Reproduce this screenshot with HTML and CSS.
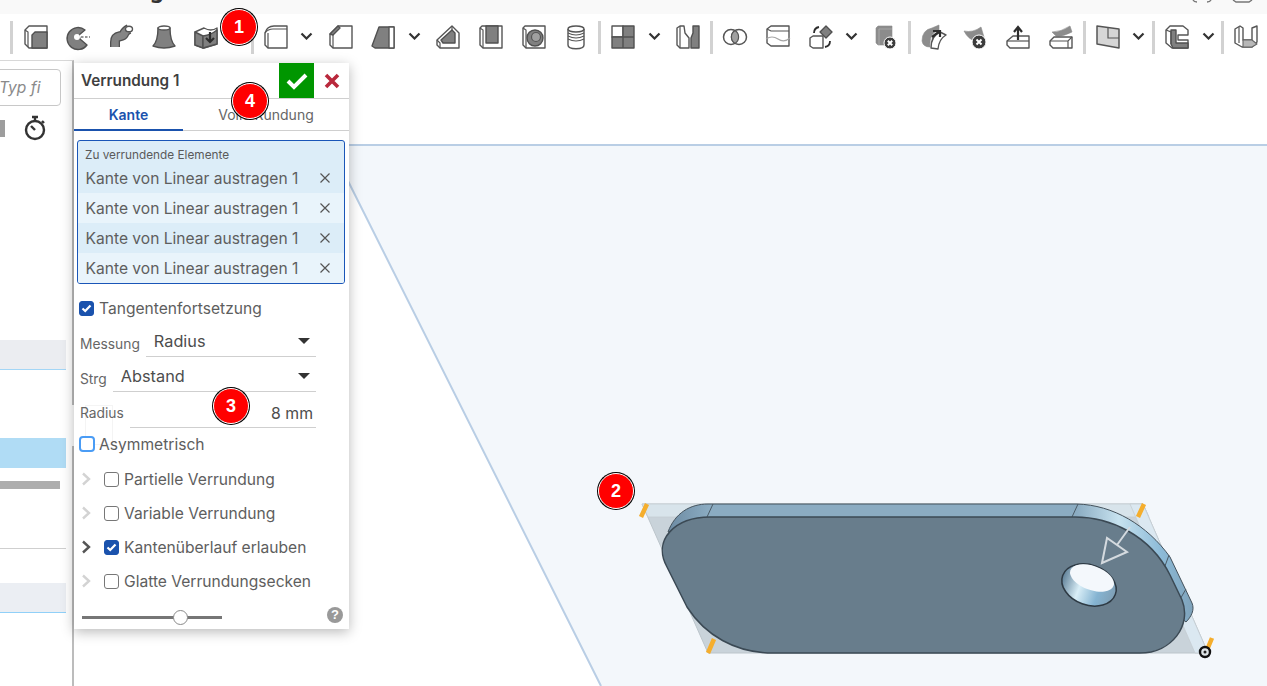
FILE: index.html
```html
<!DOCTYPE html>
<html lang="de">
<head>
<meta charset="utf-8">
<title>Verrundung</title>
<link rel="stylesheet" href="styles.css">
</head>
<body>
<div class="app">
  <div class="topstrip">
    <span class="doc-title">Verrundung</span>
    <svg class="top-frag" width="64" height="4" viewBox="0 0 64 4"><path class="frag" d="M2 0 Q3 2 6 2 M20 0 Q19 2 16 2 M42 0 L45 2 H58 L61 0"/></svg>
  </div>
  <div class="toolbar">
    <i class="sep lead"></i>
    <div class="tool"><svg viewBox="0 0 24 24"><path class="o" d="M1 5 5 1H23V23H5L1 19Z"/><path class="g" d="M8 10 11 7H23V23H8Z"/><path class="l" d="M1 5 4 7V22"/></svg></div>
    <div class="tool"><svg viewBox="0 0 24 24"><path class="g" d="M19 5A11 11 0 1 0 21 20L14 14 13 10Z"/><circle class="w" cx="11" cy="12" r="3"/><path class="d" d="M15 12H24"/></svg></div>
    <div class="tool"><svg viewBox="0 0 24 24"><path class="tube-o" d="M6 22V17C6 9 13 13 15 9 16 6 18 5 20 4"/><path class="tube-i" d="M6 22V17C6 9 13 13 15 9 16 6 18 5 20 4"/><ellipse class="o" cx="20" cy="4" rx="3.5" ry="2.8"/></svg></div>
    <div class="tool"><svg viewBox="0 0 24 24"><path class="g" d="M6 3C6 10 5 17 1 21Q12 25 23 21C19 17 18 10 18 3Z"/><ellipse class="o" cx="12" cy="3" rx="6" ry="2"/></svg></div>
    <div class="tool"><svg viewBox="0 0 24 24"><path class="o" d="M1 7 10 3Q17 7 23 3V19L10 23 1 20Z"/><path class="g" d="M1 7 9 11V23L1 20Z"/><path class="g" d="M9 11Q17 10 23 5V19L9 23Z"/><path class="arrow" d="M16 7V17M12 13 16 17 20 13"/></svg></div>
    <div class="chev"><svg viewBox="0 0 12 8"><path d="M1 1.5 6 6.5 11 1.5"/></svg></div>
    <i class="sep"></i>
    <div class="tool"><svg viewBox="0 0 24 24"><path class="o" d="M1 8Q3 1 10 1H23V23H4L1 20Z"/><path class="l" d="M1 8Q4 4 9 4H23M4 8V23"/></svg></div>
    <div class="chev"><svg viewBox="0 0 12 8"><path d="M1 1.5 6 6.5 11 1.5"/></svg></div>
    <div class="tool"><svg viewBox="0 0 24 24"><path class="o" d="M1 9 9 1H23V23H4L1 20Z"/><path class="g" d="M1 9 9 1 11 3 4 10Z"/><path class="l" d="M4 10V23"/></svg></div>
    <div class="tool"><svg viewBox="0 0 24 24"><path class="g" d="M1 21 8 2H23V23H4Z"/><path class="o" d="M18 2H23V23H18Z"/></svg></div>
    <div class="chev"><svg viewBox="0 0 12 8"><path d="M1 1.5 6 6.5 11 1.5"/></svg></div>
    <div class="tool"><svg viewBox="0 0 24 24"><path class="o" d="M1 15 16 1 23 8V23H4L1 20Z"/><path class="g" d="M5 15 16 5 19 8V18H7Z"/><path class="l" d="M1 15 4 18V23M16 1V5"/></svg></div>
    <div class="tool"><svg viewBox="0 0 24 24"><path class="o" d="M1 3 3 1H23V23H4L1 20Z"/><path class="g" d="M7 1H19V18H7Z"/><path class="l" d="M1 3 4 5V23"/></svg></div>
    <div class="tool"><svg viewBox="0 0 24 24"><path class="o" d="M1 3 3 1H23V23H4L1 20Z"/><circle class="g" cx="13" cy="13" r="8"/><circle class="m" cx="14" cy="12" r="4.5"/><path class="l" d="M1 3 4 5V23"/></svg></div>
    <div class="tool"><svg viewBox="0 0 24 24"><path class="o" d="M4 4V20C4 25 20 25 20 20V4"/><ellipse class="o" cx="12" cy="4" rx="8" ry="3"/><path class="l" d="M4 8Q12 12 20 8M4 11Q12 15 20 11M4 14Q12 18 20 14"/></svg></div>
    <i class="sep"></i>
    <div class="tool"><svg viewBox="0 0 24 24"><path class="o" d="M1 1H12V12H1Z"/><path class="g" d="M12 1H23V12H12ZM1 12H12V23H1ZM12 12H23V23H12Z"/></svg></div>
    <div class="chev"><svg viewBox="0 0 12 8"><path d="M1 1.5 6 6.5 11 1.5"/></svg></div>
    <div class="tool"><svg viewBox="0 0 24 24"><path class="o" d="M1 3 4 1H8L9 8 13 13V23H4L1 20Z"/><path class="g" d="M15 13 17 8V1H23V23H15Z"/><path class="l" d="M4 1V23"/></svg></div>
    <i class="sep"></i>
    <div class="tool"><svg viewBox="0 0 24 24"><circle class="n" cx="8" cy="12" r="7.5"/><circle class="n" cx="16" cy="12" r="7.5"/><path class="m" d="M12 5.6A7.5 7.5 0 0 1 12 18.4 7.5 7.5 0 0 1 12 5.6Z"/></svg></div>
    <div class="tool"><svg viewBox="0 0 24 24"><path class="o" d="M1 4 5 1H23V21H5L1 18Z"/><path class="l" d="M1 4 5 6H23"/><path class="lg" d="M0 14Q6 10 12 14T24 13"/></svg></div>
    <div class="tool"><svg viewBox="0 0 24 24"><path class="o" d="M1 13 4 11H14V23H4L1 21Z"/><path class="g" d="M17 1 23 7 17 13 11 7Z"/><path class="arrow thin" d="M5 8Q5 3 10 2M21 16Q21 21 16 22"/></svg></div>
    <div class="chev"><svg viewBox="0 0 12 8"><path d="M1 1.5 6 6.5 11 1.5"/></svg></div>
    <div class="tool"><svg viewBox="0 0 24 24"><path class="gf" d="M2 3 4 1H18V20H4L2 18Z"/><path class="lg" d="M5 4H18M5 4V20"/><circle class="x-c" cx="16" cy="18" r="6"/><path class="x-w" d="M13.8 15.8 18.2 20.2M18.2 15.8 13.8 20.2"/></svg></div>
    <i class="sep"></i>
    <div class="tool"><svg viewBox="0 0 24 24"><path class="gf" d="M1 16Q1 5 11 3L18 0V5Q8 8 9 22Q2 22 1 16Z"/><path class="o" d="M10 23Q10 11 19 7L25 10Q18 14 17 24Z"/><path class="arrow" d="M19 6 11 12M12 6H19V12"/></svg></div>
    <div class="tool"><svg viewBox="0 0 24 24"><path class="gf" d="M1 6Q10 8 18 2L21 12 12 16Q5 14 1 6Z"/><circle class="x-c" cx="16" cy="17" r="7"/><path class="x-w" d="M13.5 14.5 18.5 19.5M18.5 14.5 13.5 19.5"/></svg></div>
    <div class="tool"><svg viewBox="0 0 24 24"><path class="o" d="M1 16 7 11H23V23H4L1 20Z"/><path class="l" d="M1 16H23"/><path class="arrow" d="M12 15V3M8 7 12 2 16 7"/></svg></div>
    <div class="tool"><svg viewBox="0 0 24 24"><path class="gf" d="M3 7Q12 7 21 1L23 7Q14 12 7 11Z"/><path class="o" d="M1 16 5 12H23V23H4L1 20Z"/><path class="l" d="M1 16H19L23 12M19 16V23"/></svg></div>
    <i class="sep"></i>
    <div class="tool"><svg viewBox="0 0 24 24"><path class="pl" d="M1 1 23 4V23L1 19Z"/><path class="l" d="M12 3V13H23"/></svg></div>
    <div class="chev"><svg viewBox="0 0 12 8"><path d="M1 1.5 6 6.5 11 1.5"/></svg></div>
    <i class="sep"></i>
    <div class="tool"><svg viewBox="0 0 24 24"><path class="o" d="M1 5 5 1H18L23 5V10H13V15H23V23H7L1 18Z"/><path class="g" d="M6 5V19L8 23H23V18H11V5Z"/><path class="l" d="M1 5 6 7V19"/></svg></div>
    <div class="chev"><svg viewBox="0 0 12 8"><path d="M1 1.5 6 6.5 11 1.5"/></svg></div>
    <i class="sep"></i>
    <div class="tool"><svg viewBox="0 0 24 24"><path class="o" d="M1 4 6 1 9 3V15H18V3L23 1V17L18 22H8L1 18Z"/><path class="gl" d="M9 15H18L23 19 18 22H9Z"/><path class="l" d="M5 2V18"/></svg></div>
  </div>

  <div class="main">
    <aside class="side">
      <div class="search"><span class="search-text">Typ fi</span></div>
      <div class="side-icons">
        <i class="side-block"></i>
        <svg class="watch" width="24" height="26" viewBox="0 0 24 26"><path d="M9 2H15M12 2V6M19 6 21 8"/><circle cx="12" cy="15" r="9"/><path d="M12 15 8 11"/></svg>
      </div>
      <div class="row-a"></div>
      <div class="row-sel"></div>
      <div class="row-bar"></div>
      <div class="row-line"></div>
      <div class="row-b"></div>
    </aside>
    <i class="side-gap"></i>

    <section class="view">
      <svg class="scene" width="1267" height="626" viewBox="0 60 1267 626">
        <defs>
          <linearGradient id="bandG" gradientUnits="userSpaceOnUse" x1="668" x2="1192" y1="0" y2="0">
            <stop offset="0" stop-color="#6d8ba3"/>
            <stop offset="0.08" stop-color="#8bacc2"/>
            <stop offset="0.78" stop-color="#8bacc2"/>
            <stop offset="0.86" stop-color="#c7e2ef"/>
            <stop offset="0.94" stop-color="#8dbbd8"/>
            <stop offset="1" stop-color="#7fa3bb"/>
          </linearGradient>
          <linearGradient id="holeG" x1="0" x2="1" y1="0" y2="0">
            <stop offset="0" stop-color="#5f8098"/>
            <stop offset="0.35" stop-color="#d9eef7"/>
            <stop offset="0.7" stop-color="#85b4d2"/>
            <stop offset="1" stop-color="#7f9fb5"/>
          </linearGradient>
        </defs>
        <path class="plane" d="M330 145H1267V686H601Z"/>
        <path class="plane-edge" d="M330 145H1267M330 145 601 686"/>
        <path class="ghost-fill" d="M642 504H1143L1208 653H708Z"/>
        <path class="ghost-top" d="M642 504H1143L1149 517H648Z"/>
        <path class="ghost-right" d="M1143 504 1208 653H1195L1130 504Z"/>
        <path class="band" d="M708 504H1077C1113 505 1147 525 1170 557L1192 603C1195 610 1191 617 1186 622L1160 600 1075 530H700L668 532C675 513 690 504 708 504Z"/>
        <path class="seam" d="M713 504 707 517M1078 504 1072 517M1169 555 1165 566M1186 589 1179 601"/>
        <path class="face" d="M710 517H1075C1110 517 1150 535 1170 575L1182 600C1192 625 1172 653 1140 653H773C735 653 705 635 687 607L667 567C652 540 675 517 710 517Z"/>
        <g transform="rotate(20 1089 585)">
          <ellipse class="hole-wall" cx="1089" cy="585" rx="28" ry="20"/>
        </g>
        <g transform="rotate(20 1092 578)">
          <ellipse class="hole-open" cx="1092" cy="578" rx="23" ry="12"/>
        </g>
        <path class="move-arrow" d="M1130 527 1117 545M1102 563 1107 538 1127 552Z"/>
        <path class="tick" d="M647 504 641 517M714 639 708 653M1144 504 1138 517M1212 638 1207 650"/>
        <circle class="pin-o" cx="1205" cy="652" r="5"/>
        <circle class="pin-i" cx="1205" cy="652" r="1.5"/>
      </svg>
    </section>
  </div>

  <div class="dialog">
    <header class="dlg-head">
      <h2 class="dlg-title">Verrundung 1</h2>
      <button class="btn-ok"><svg width="22" height="18" viewBox="0 0 22 18"><path d="M2 9 8 15 20 3"/></svg></button>
      <button class="btn-no"><svg width="16" height="16" viewBox="0 0 16 16"><path d="M2 2 14 14M14 2 2 14"/></svg></button>
    </header>
    <nav class="tabs">
      <div class="tab active">Kante</div>
      <div class="tab">Volle Rundung</div>
    </nav>
    <div class="picks">
      <div class="picks-label">Zu verrundende Elemente</div>
      <div class="pick"><span>Kante von Linear austragen 1</span><svg width="10" height="10" viewBox="0 0 10 10"><path d="M0.5 0.5 9.5 9.5M9.5 0.5 0.5 9.5"/></svg></div>
      <div class="pick alt"><span>Kante von Linear austragen 1</span><svg width="10" height="10" viewBox="0 0 10 10"><path d="M0.5 0.5 9.5 9.5M9.5 0.5 0.5 9.5"/></svg></div>
      <div class="pick"><span>Kante von Linear austragen 1</span><svg width="10" height="10" viewBox="0 0 10 10"><path d="M0.5 0.5 9.5 9.5M9.5 0.5 0.5 9.5"/></svg></div>
      <div class="pick alt"><span>Kante von Linear austragen 1</span><svg width="10" height="10" viewBox="0 0 10 10"><path d="M0.5 0.5 9.5 9.5M9.5 0.5 0.5 9.5"/></svg></div>
    </div>
    <label class="check-row first"><span class="box on"><svg width="11" height="9" viewBox="0 0 11 9"><path d="M1.5 4.5 4.2 7 9.5 1.5"/></svg></span>Tangentenfortsetzung</label>
    <div class="field first-field"><span class="field-label">Messung</span><div class="field-ctl"><span>Radius</span><i class="caret"></i></div></div>
    <div class="field"><span class="field-label">Strg</span><div class="field-ctl"><span>Abstand</span><i class="caret"></i></div></div>
    <div class="field radius"><span class="field-label">Radius</span><div class="field-ctl end"><span>8 mm</span></div></div>
    <label class="check-row asym"><span class="box focus"></span>Asymmetrisch</label>
    <div class="opt"><svg class="arr" width="10" height="14" viewBox="0 0 10 14"><path d="M2 1.5 8 7 2 12.5"/></svg><span class="box"></span>Partielle Verrundung</div>
    <div class="opt"><svg class="arr" width="10" height="14" viewBox="0 0 10 14"><path d="M2 1.5 8 7 2 12.5"/></svg><span class="box"></span>Variable Verrundung</div>
    <div class="opt"><svg class="arr dark" width="10" height="14" viewBox="0 0 10 14"><path d="M2 1.5 8 7 2 12.5"/></svg><span class="box on"><svg width="11" height="9" viewBox="0 0 11 9"><path d="M1.5 4.5 4.2 7 9.5 1.5"/></svg></span>Kantenüberlauf erlauben</div>
    <div class="opt"><svg class="arr" width="10" height="14" viewBox="0 0 10 14"><path d="M2 1.5 8 7 2 12.5"/></svg><span class="box"></span>Glatte Verrundungsecken</div>
    <div class="dlg-foot">
      <div class="slider"><i class="thumb"></i></div>
      <span class="help">?</span>
    </div>
    <div class="dlg-ghost"></div>
  </div>

  <span class="badge b1">1</span>
  <span class="badge b2">2</span>
  <span class="badge b3">3</span>
  <span class="badge b4">4</span>
</div>
</body>
</html>
```
FILE: styles.css
```css
* { box-sizing: border-box; }
html, body { margin: 0; height: 100%; }
body { font-family: Inter, "Noto Sans", "Liberation Sans", sans-serif; background: #fff; overflow: hidden; }
.app { position: relative; width: 1267px; height: 686px; display: flex; flex-direction: column; overflow: hidden; }

.topstrip { height: 14px; background: #f9f9f9; overflow: hidden; position: relative; flex: none; }
.doc-title { position: absolute; right: 1103px; bottom: 14px; font-family: "Noto Sans", sans-serif; font-size: 22px; line-height: 22px; font-weight: 700; color: #333; }
.top-frag { position: absolute; left: 1191px; top: 0; }
.frag { fill: none; stroke: #777; stroke-width: 1.4; }

.toolbar { height: 46px; flex: none; display: flex; align-items: center; padding-left: 10px; background: #fff; }
.sep { flex: none; width: 3px; height: 33px; background: #d2d2d2; margin: 0 .65px; }
.sep.lead { margin: 0 1.4px 0 0; }
.tool { flex: none; width: 42.7px; height: 24px; display: flex; justify-content: center; }
.tool svg { width: 24px; height: 24px; overflow: visible; }
.chev { flex: none; width: 19.3px; margin-right: 3px; height: 10px; display: flex; justify-content: center; }
.chev svg { width: 13px; height: 8px; flex: none; }
.chev path { fill: none; stroke: #333; stroke-width: 2.2; }
.o { fill: #fff; stroke: #555; stroke-width: 1.4; stroke-linejoin: round; }
.g { fill: #808080; stroke: #505050; stroke-width: 1.4; stroke-linejoin: round; }
.gl { fill: #b8b8b8; stroke: #666; stroke-width: 1.1; stroke-linejoin: round; }
.gf { fill: #8c8c8c; stroke: #8c8c8c; stroke-width: .6; }
.w { fill: #fff; }
.m { fill: #a0a0a0; stroke: #555; stroke-width: 1.2; }
.n { fill: #fff; stroke: #555; stroke-width: 1.5; }
.pl { fill: #d6d6d6; stroke: #555; stroke-width: 1.5; stroke-linejoin: round; }
.l { fill: none; stroke: #555; stroke-width: 1.2; }
.lg { fill: none; stroke: #a5a5a5; stroke-width: 1.2; }
.d { fill: none; stroke: #777; stroke-width: 1.3; stroke-dasharray: 2.5 1.5; }
.tube-o { fill: none; stroke: #505050; stroke-width: 10; }
.tube-i { fill: none; stroke: #858585; stroke-width: 7.4; }
.arrow { fill: none; stroke: #2d2d2d; stroke-width: 2.2; }
.arrow.thin { stroke-width: 1.8; }
.x-c { fill: #3c3c3c; stroke: #fff; stroke-width: 1; }
.x-w { fill: none; stroke: #fff; stroke-width: 2; }

.main { flex: 1; display: flex; min-height: 0; }
.side { flex: none; width: 73.5px; position: relative; overflow: hidden; border-top: 1px solid #d8d8d8; border-right: 2px solid #bcbcbc; padding: 8px 6px 0 0; display: flex; flex-direction: column; background: #fff; }
.search { height: 37px; width: 67px; margin-left: -6px; border: 1px solid #c8c8c8; border-radius: 4px; overflow: hidden; display: flex; align-items: center; flex: none; }
.search-text { font-style: italic; font-size: 15.6px; color: #8a8a8a; margin-left: 4px; }
.side-icons { height: 28px; margin-top: 8px; display: flex; align-items: center; flex: none; }
.side-block { width: 5px; height: 17px; background: #9d9d9d; }
.watch { margin-left: 18px; fill: none; stroke: #333; stroke-width: 2.4; }
.row-a { height: 30px; margin-top: 198px; background: #ebedf1; border-bottom: 1px solid #a3d6f6; flex: none; }
.row-sel { height: 30px; margin-top: 68px; background: #b0dcf5; flex: none; }
.row-bar { height: 8px; width: 60px; margin-top: 13px; background: #adadad; flex: none; }
.row-line { height: 1px; margin-top: 59px; background: #cfcfcf; flex: none; }
.row-b { height: 30px; margin-top: 34px; background: #ebeef3; border-bottom: 1px solid #90d0f8; flex: none; }
.side-gap { position: absolute; left: 71px; top: 405px; width: 3px; height: 41px; background: #fff; }

.view { flex: 1; position: relative; min-width: 0; }
.scene { position: absolute; right: 0; top: 0; display: block; }
.plane { fill: #f3f7fb; }
.plane-edge { fill: none; stroke: #b9cee5; stroke-width: 2; }
.ghost-fill { fill: #c9d3da; stroke: #bcc5cb; stroke-width: 1; }
.ghost-top { fill: #d8e4eb; stroke: #c5cdd2; stroke-width: .8; }
.ghost-right { fill: #dbe8f1; stroke: #c5cdd2; stroke-width: .8; }
.band { fill: url(#bandG); stroke: #44525c; stroke-width: 1; }
.seam { fill: none; stroke: #4a5a66; stroke-width: 1; }
.face { fill: #687d8c; stroke: #3b4954; stroke-width: 1.5; }
.hole-wall { fill: url(#holeG); stroke: #2e3a44; stroke-width: 1.5; }
.hole-open { fill: #f4f8fc; }
.move-arrow { fill: none; stroke: #d4dadf; stroke-width: 2; }
.tick { fill: none; stroke: #f5ae2d; stroke-width: 4.5; }
.pin-o { fill: #dfe5e8; stroke: #111; stroke-width: 2.4; }
.pin-i { fill: #222; }

.dialog { position: absolute; z-index: 1; left: 74px; top: 63px; width: 275px; height: 566px; background: #fff; box-shadow: 0 3px 12px rgba(0,0,0,.28); color: #5e5e5e; font-size: 15.6px; display: flex; flex-direction: column; }
.dlg-head { display: flex; height: 36px; flex: none; border-bottom: 1px solid #cfcfcf; align-items: stretch; }
.dlg-title { flex: 1; margin: 0; padding-left: 7px; font-size: 15.3px; font-weight: 600; line-height: 36px; color: #3f3f3f; }
.btn-ok, .btn-no { width: 35px; height: 35px; border: 0; padding: 0; display: flex; align-items: center; justify-content: center; flex: none; }
.btn-ok { background: #009600; }
.btn-ok path { fill: none; stroke: #fff; stroke-width: 4; }
.btn-no { background: #fff; }
.btn-no path { fill: none; stroke: #b9283c; stroke-width: 3.6; }
.tabs { display: flex; height: 32px; flex: none; border-bottom: 1px solid #cfcfcf; }
.tab { flex: 1; text-align: center; font-size: 14px; line-height: 32px; color: #666; }
.tab.active { flex: none; width: 109px; color: #1a52ad; font-weight: 600; border-bottom: 2px solid #1a52ad; height: 32px; }
.picks { margin: 9px 4px 0 3px; height: 144px; flex: none; border: 1.5px solid #1a56b8; border-radius: 3px; background: #dcedf8; overflow: hidden; }
.picks-label { height: 22px; padding: 6px 0 0 7px; font-size: 11.8px; line-height: 16px; color: #5a5a5a; }
.pick { height: 30px; display: flex; align-items: center; justify-content: space-between; padding: 0 14px 0 7.5px; color: #5e5e5e; background: #dcedf8; }
.pick.alt { background: #e9f4fb; }
.pick svg { fill: none; stroke: #555; stroke-width: 1.2; flex: none; }
.check-row { display: flex; align-items: center; height: 24px; padding-left: 5px; gap: 5px; flex: none; }
.check-row.first { margin-top: 12px; }
.check-row.asym { margin-top: 4px; gap: 4px; }
.box { width: 15px; height: 15px; border: 1px solid #777; border-radius: 3px; display: flex; align-items: center; justify-content: center; flex: none; background: #fff; }
.box.on { background: #1a52ad; border-color: #1a52ad; }
.box.on path { fill: none; stroke: #fff; stroke-width: 2.2; }
.box.focus { border: 2px solid #4a9cf5; border-radius: 4px; width: 16px; height: 16px; }
.field { display: flex; align-items: flex-end; gap: 6px; height: 31px; margin: 4px 33px 0 6px; flex: none; }
.first-field { margin-top: 6px; }
.field-label { font-size: 13.8px; color: #666; line-height: 20px; padding-bottom: 3px; }
.field-ctl { flex: 1; height: 100%; display: flex; align-items: center; justify-content: space-between; border-bottom: 1px solid #cfcfcf; padding: 0 6px 0 8px; font-size: 16.3px; color: #4d4d4d; }
.field-ctl.end { justify-content: flex-end; padding: 3px 3px 0 0; font-size: 15.8px; }
.radius { height: 32px; }
.radius .field-label { padding-bottom: 5px; }
.caret { width: 0; height: 0; border-left: 6px solid transparent; border-right: 6px solid transparent; border-top: 6px solid #333; }
.opt { height: 34px; display: flex; align-items: center; padding-left: 7px; flex: none; }
.opt .box { margin-right: 5px; }
.opt .arr { margin-right: 13px; fill: none; stroke: #d3d3d3; stroke-width: 2.4; flex: none; }
.opt .arr.dark { stroke: #555; }
.asym + .opt { margin-top: 6px; }
.dlg-foot { flex: 1; position: relative; display: flex; align-items: center; justify-content: space-between; padding: 7px 6px 0 8px; }
.slider { position: relative; width: 140px; height: 3px; background: #767676; }
.thumb { position: absolute; left: 91px; top: -6px; width: 15px; height: 15px; border-radius: 50%; background: #fff; border: 1.5px solid #8a8a8a; }
.help { width: 16px; height: 16px; margin-top: -5px; border-radius: 50%; background: #999; color: #fff; font-family: "Liberation Sans", sans-serif; font-size: 13px; font-weight: 700; line-height: 16px; text-align: center; }
.dlg-ghost { position: absolute; z-index: -1; left: 11px; top: 342px; width: 28px; height: 40px; border: 1px solid #f4f4f4; }

.badge { position: absolute; z-index: 2; width: 36px; height: 36px; margin: -18px 0 0 -18px; border-radius: 50%; background: #f00; border: 1px solid #fff; box-shadow: 0 0 0 1px #000; color: #fff; font-family: "Liberation Sans", sans-serif; font-size: 18px; font-weight: 700; line-height: 34px; text-align: center; }
.b1 { left: 239px; top: 27px; }
.b2 { left: 616px; top: 491px; }
.b3 { left: 231px; top: 406px; }
.b4 { left: 250px; top: 101px; }
```
